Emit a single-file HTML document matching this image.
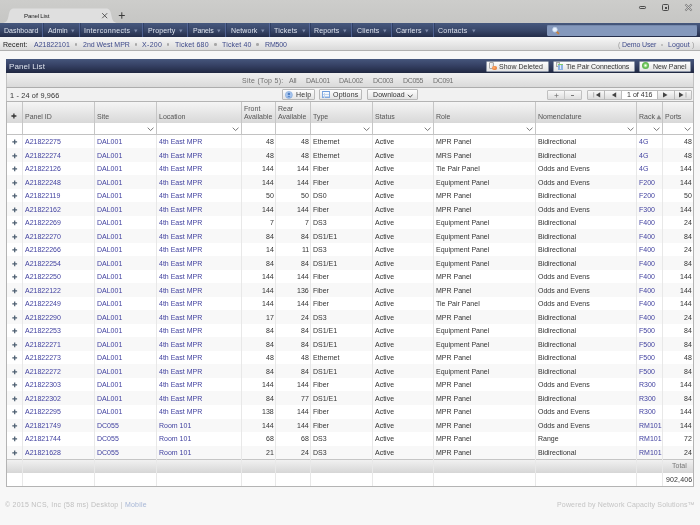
<!DOCTYPE html><html><head><meta charset="utf-8"><style>
*{margin:0;padding:0;box-sizing:border-box}
html,body{width:700px;height:525px;overflow:hidden}
body{position:relative;background:#f7f7f7;font-family:"Liberation Sans",sans-serif;font-size:7px;color:#333}
.abs{position:absolute}
.t{position:absolute;white-space:nowrap;will-change:transform}
</style></head><body>
<div class="abs" style="left:0;top:0;width:700px;height:23px;background:linear-gradient(#cdcdcb,#c6c6c4)"></div>
<svg class="abs" style="left:0;top:0" width="140" height="23"><path d="M2 23 C6 23 7.5 21 8.5 16 C9.5 10.5 10.5 8.6 14 8.6 L106 8.6 C109.5 8.6 110.5 10.5 111.5 16 C112.5 21 114 23 118 23 Z" fill="#dfdfdf"/></svg>
<div class="t" style="top:11.91px;font-size:6.2px;line-height:7.12px;color:#222;left:23.60px;letter-spacing:-0.199px;">Panel List</div>
<svg class="abs" style="left:101px;top:12px" width="8" height="8"><path d="M1.2 1.2 L6.2 6.2 M6.2 1.2 L1.2 6.2" stroke="#3a3a3a" stroke-width="0.8"/></svg>
<svg class="abs" style="left:118px;top:12px" width="8" height="8"><path d="M0.8 3.5 L6.8 3.5 M3.8 0.3 L3.8 6.7" stroke="#3a3a3a" stroke-width="1"/></svg>
<div class="abs" style="left:639px;top:6.3px;width:7px;height:2.4px;border:1px solid #4a4a4a;border-radius:1.2px"></div>
<div class="abs" style="left:662px;top:4px;width:7px;height:7px;border:1px solid #4a4a4a;border-radius:1.5px"></div>
<div class="abs" style="left:664.5px;top:6.5px;width:2px;height:2px;background:#4a4a4a"></div>
<svg class="abs" style="left:684px;top:3px" width="9" height="9"><path d="M1.4 1.4 L7.6 7.6 M7.6 1.4 L1.4 7.6" stroke="#7a7a7a" stroke-width="1.9"/><path d="M1.6 1.6 L7.4 7.4 M7.4 1.6 L1.6 7.4" stroke="#e4e4e4" stroke-width="0.7"/></svg>
<div class="abs" style="left:0;top:23px;width:700px;height:14px;background:linear-gradient(#46587e,#384668 55%,#242d49)"></div>
<div class="t" style="top:26.77px;font-size:7px;line-height:8.04px;color:#dde2ec;left:3.70px;letter-spacing:0.006px;">Dashboard</div>
<div class="abs" style="left:42.0px;top:23px;width:1px;height:14px;background:#56699a;opacity:.85"></div>
<div class="abs" style="left:43.0px;top:23px;width:1px;height:14px;background:#26355a;opacity:.6"></div>
<div class="t" style="top:26.77px;font-size:7px;line-height:8.04px;color:#dde2ec;left:47.80px;letter-spacing:-0.049px;">Admin</div>
<div class="abs" style="left:78.5px;top:23px;width:1px;height:14px;background:#56699a;opacity:.85"></div>
<div class="abs" style="left:79.5px;top:23px;width:1px;height:14px;background:#26355a;opacity:.6"></div>
<svg class="abs" style="left:70.60000000000001px;top:28.9px" width="4" height="4"><path d="M0.1 0.4 L3.5 0.4 L1.8 3.6 Z" fill="#7f8cab"/></svg>
<div class="t" style="top:26.77px;font-size:7px;line-height:8.04px;color:#dde2ec;left:83.80px;letter-spacing:0.336px;">Interconnects</div>
<div class="abs" style="left:142.3px;top:23px;width:1px;height:14px;background:#56699a;opacity:.85"></div>
<div class="abs" style="left:143.3px;top:23px;width:1px;height:14px;background:#26355a;opacity:.6"></div>
<svg class="abs" style="left:133.89999999999998px;top:28.9px" width="4" height="4"><path d="M0.1 0.4 L3.5 0.4 L1.8 3.6 Z" fill="#7f8cab"/></svg>
<div class="t" style="top:26.77px;font-size:7px;line-height:8.04px;color:#dde2ec;left:147.60px;letter-spacing:0.116px;">Property</div>
<div class="abs" style="left:187.1px;top:23px;width:1px;height:14px;background:#56699a;opacity:.85"></div>
<div class="abs" style="left:188.1px;top:23px;width:1px;height:14px;background:#26355a;opacity:.6"></div>
<svg class="abs" style="left:178.6px;top:28.9px" width="4" height="4"><path d="M0.1 0.4 L3.5 0.4 L1.8 3.6 Z" fill="#7f8cab"/></svg>
<div class="t" style="top:26.77px;font-size:7px;line-height:8.04px;color:#dde2ec;left:192.60px;letter-spacing:-0.134px;">Panels</div>
<div class="abs" style="left:225.4px;top:23px;width:1px;height:14px;background:#56699a;opacity:.85"></div>
<div class="abs" style="left:226.4px;top:23px;width:1px;height:14px;background:#26355a;opacity:.6"></div>
<svg class="abs" style="left:216.79999999999998px;top:28.9px" width="4" height="4"><path d="M0.1 0.4 L3.5 0.4 L1.8 3.6 Z" fill="#7f8cab"/></svg>
<div class="t" style="top:26.77px;font-size:7px;line-height:8.04px;color:#dde2ec;left:230.50px;letter-spacing:0.116px;">Network</div>
<div class="abs" style="left:268.9px;top:23px;width:1px;height:14px;background:#56699a;opacity:.85"></div>
<div class="abs" style="left:269.9px;top:23px;width:1px;height:14px;background:#26355a;opacity:.6"></div>
<svg class="abs" style="left:260.7px;top:28.9px" width="4" height="4"><path d="M0.1 0.4 L3.5 0.4 L1.8 3.6 Z" fill="#7f8cab"/></svg>
<div class="t" style="top:26.77px;font-size:7px;line-height:8.04px;color:#dde2ec;left:274.30px;letter-spacing:0.240px;">Tickets</div>
<div class="abs" style="left:309.4px;top:23px;width:1px;height:14px;background:#56699a;opacity:.85"></div>
<div class="abs" style="left:310.4px;top:23px;width:1px;height:14px;background:#26355a;opacity:.6"></div>
<svg class="abs" style="left:301.5px;top:28.9px" width="4" height="4"><path d="M0.1 0.4 L3.5 0.4 L1.8 3.6 Z" fill="#7f8cab"/></svg>
<div class="t" style="top:26.77px;font-size:7px;line-height:8.04px;color:#dde2ec;left:314.40px;letter-spacing:0.141px;">Reports</div>
<div class="abs" style="left:351.3px;top:23px;width:1px;height:14px;background:#56699a;opacity:.85"></div>
<div class="abs" style="left:352.3px;top:23px;width:1px;height:14px;background:#26355a;opacity:.6"></div>
<svg class="abs" style="left:343.2px;top:28.9px" width="4" height="4"><path d="M0.1 0.4 L3.5 0.4 L1.8 3.6 Z" fill="#7f8cab"/></svg>
<div class="t" style="top:26.77px;font-size:7px;line-height:8.04px;color:#dde2ec;left:356.80px;letter-spacing:0.156px;">Clients</div>
<div class="abs" style="left:390.8px;top:23px;width:1px;height:14px;background:#56699a;opacity:.85"></div>
<div class="abs" style="left:391.8px;top:23px;width:1px;height:14px;background:#26355a;opacity:.6"></div>
<svg class="abs" style="left:382.5px;top:28.9px" width="4" height="4"><path d="M0.1 0.4 L3.5 0.4 L1.8 3.6 Z" fill="#7f8cab"/></svg>
<div class="t" style="top:26.77px;font-size:7px;line-height:8.04px;color:#dde2ec;left:396.00px;letter-spacing:0.076px;">Carriers</div>
<div class="abs" style="left:432.5px;top:23px;width:1px;height:14px;background:#56699a;opacity:.85"></div>
<div class="abs" style="left:433.5px;top:23px;width:1px;height:14px;background:#26355a;opacity:.6"></div>
<svg class="abs" style="left:424.5px;top:28.9px" width="4" height="4"><path d="M0.1 0.4 L3.5 0.4 L1.8 3.6 Z" fill="#7f8cab"/></svg>
<div class="t" style="top:26.77px;font-size:7px;line-height:8.04px;color:#dde2ec;left:438.00px;letter-spacing:0.222px;">Contacts</div>
<svg class="abs" style="left:471.5px;top:28.9px" width="4" height="4"><path d="M0.1 0.4 L3.5 0.4 L1.8 3.6 Z" fill="#7f8cab"/></svg>
<div class="abs" style="left:547.4px;top:25.1px;width:150px;height:10.8px;background:#8498bc;border-radius:1.5px;box-shadow:inset 0 1px 0 #7488ac"></div>
<svg class="abs" style="left:551.4px;top:26px" width="10" height="10"><path d="M5.6 5.6 L7.4 7.4" stroke="#c8803c" stroke-width="2" stroke-linecap="round"/><circle cx="3.9" cy="3.7" r="2.4" fill="#e8f0fb" stroke="#bcd0ea" stroke-width="0.7"/></svg>
<div class="abs" style="left:0;top:37px;width:700px;height:13.5px;background:linear-gradient(#f7f7f7,#dadada);border-bottom:1px solid #b0b0b0"></div>
<div class="t" style="top:40.77px;font-size:7px;line-height:8.04px;color:#1a1a1a;left:2.70px;letter-spacing:0.068px;">Recent:</div>
<div class="t" style="top:40.77px;font-size:7px;line-height:8.04px;color:#3e4a8a;left:33.75px;letter-spacing:-0.003px;">A21822101</div>
<div class="t" style="top:40.77px;font-size:7px;line-height:8.04px;color:#3e4a8a;left:82.50px;letter-spacing:-0.004px;">2nd West MPR</div>
<div class="t" style="top:40.77px;font-size:7px;line-height:8.04px;color:#3e4a8a;left:141.80px;letter-spacing:0.323px;">X-200</div>
<div class="t" style="top:40.77px;font-size:7px;line-height:8.04px;color:#3e4a8a;left:175.00px;letter-spacing:0.165px;">Ticket 680</div>
<div class="t" style="top:40.77px;font-size:7px;line-height:8.04px;color:#3e4a8a;left:222.10px;letter-spacing:0.162px;">Ticket 40</div>
<div class="t" style="top:40.77px;font-size:7px;line-height:8.04px;color:#3e4a8a;left:264.50px;letter-spacing:-0.156px;">RM500</div>
<div class="abs" style="left:75.0px;top:43.4px;width:2.4px;height:2.4px;border-radius:50%;background:#a8a8a8"></div>
<div class="abs" style="left:134.60000000000002px;top:43.4px;width:2.4px;height:2.4px;border-radius:50%;background:#a8a8a8"></div>
<div class="abs" style="left:167.10000000000002px;top:43.4px;width:2.4px;height:2.4px;border-radius:50%;background:#a8a8a8"></div>
<div class="abs" style="left:214.20000000000002px;top:43.4px;width:2.4px;height:2.4px;border-radius:50%;background:#a8a8a8"></div>
<div class="abs" style="left:256.40000000000003px;top:43.4px;width:2.4px;height:2.4px;border-radius:50%;background:#a8a8a8"></div>
<div class="t" style="top:40.97px;font-size:7px;line-height:8.04px;color:#9a9a9a;left:617.80px;">(</div>
<div class="t" style="top:40.77px;font-size:7px;line-height:8.04px;color:#3e4a8a;left:621.70px;letter-spacing:-0.123px;">Demo User</div>
<div class="abs" style="left:660.7px;top:43.8px;width:2px;height:2px;border-radius:50%;background:#b4b4b4"></div>
<div class="t" style="top:40.77px;font-size:7px;line-height:8.04px;color:#3e4a8a;left:667.90px;letter-spacing:0.063px;">Logout</div>
<div class="t" style="top:40.97px;font-size:7px;line-height:8.04px;color:#9a9a9a;left:692.20px;">)</div>
<div class="abs" style="left:6.25px;top:58.6px;width:687.25px;height:14px;background:linear-gradient(#46567c,#343f62 50%,#202841)"></div>
<div class="t" style="top:61.82px;font-size:8px;line-height:9.19px;color:#dde2ec;left:8.90px;letter-spacing:0.086px;">Panel List</div>
<div class="abs" style="left:485.5px;top:60.5px;width:63.10000000000002px;height:11.0px;background:linear-gradient(#fdfdfd,#e4e4e4);border:1px solid #8e97a8;border-radius:1px"></div>
<div class="t" style="top:63.17px;font-size:7px;line-height:8.04px;color:#333;left:499.10px;letter-spacing:0.017px;">Show Deleted</div>
<div class="abs" style="left:552.7px;top:60.5px;width:82.29999999999995px;height:11.0px;background:linear-gradient(#fdfdfd,#e4e4e4);border:1px solid #8e97a8;border-radius:1px"></div>
<div class="t" style="top:63.17px;font-size:7px;line-height:8.04px;color:#333;left:566.00px;letter-spacing:-0.076px;">Tie Pair Connections</div>
<div class="abs" style="left:638.9px;top:60.5px;width:52.39999999999998px;height:11.0px;background:linear-gradient(#fdfdfd,#e4e4e4);border:1px solid #8e97a8;border-radius:1px"></div>
<div class="t" style="top:63.17px;font-size:7px;line-height:8.04px;color:#333;left:652.90px;letter-spacing:-0.040px;">New Panel</div>
<div class="abs" style="left:489.2px;top:62.3px;width:5.2px;height:7px;background:linear-gradient(90deg,#fafafa,#dedede);border:0.7px solid #a8a8a8;border-radius:1px"></div>
<div class="abs" style="left:492.4px;top:66.3px;width:4.2px;height:4.2px;border-radius:50%;background:radial-gradient(circle at 40% 40%,#ffb070,#e0641a)"></div>
<div class="abs" style="left:556.3px;top:62.3px;width:4px;height:4.5px;background:#e8e8e8;border:0.6px solid #aaa"></div>
<div class="abs" style="left:557.5px;top:63.8px;width:5.8px;height:6px;background:#dce9f8;border:0.6px solid #8fb4e4"></div>
<div class="abs" style="left:559.4px;top:64.6px;width:0.6px;height:4.6px;background:#8fb4e4"></div>
<div class="abs" style="left:561.2px;top:64.6px;width:0.6px;height:4.6px;background:#8fb4e4"></div>
<div class="abs" style="left:557.8px;top:64.1px;width:5px;height:0.8px;background:#7ecb6a"></div>
<div class="abs" style="left:641.8px;top:62.2px;width:7.2px;height:7.2px;border-radius:50%;background:radial-gradient(circle,#ffffff 0,#c9f0b8 18%,#6cc25a 45%,#3f9d36 100%)"></div>
<div class="abs" style="left:6.25px;top:72.6px;width:687.25px;height:15px;background:linear-gradient(#f0f0f0,#dadada);border-left:1px solid #c2c2c2;border-right:1px solid #c2c2c2;border-bottom:1px solid #adadad"></div>
<div class="t" style="top:76.67px;font-size:7px;line-height:8.04px;color:#707070;left:242.00px;letter-spacing:0.296px;">Site (Top 5):</div>
<div class="t" style="top:76.67px;font-size:7px;line-height:8.04px;color:#707070;left:289.00px;letter-spacing:-0.094px;">All</div>
<div class="t" style="top:76.67px;font-size:7px;line-height:8.04px;color:#707070;left:305.70px;letter-spacing:-0.216px;">DAL001</div>
<div class="t" style="top:76.67px;font-size:7px;line-height:8.04px;color:#707070;left:338.90px;letter-spacing:-0.216px;">DAL002</div>
<div class="t" style="top:76.67px;font-size:7px;line-height:8.04px;color:#707070;left:372.90px;letter-spacing:-0.359px;">DC003</div>
<div class="t" style="top:76.67px;font-size:7px;line-height:8.04px;color:#707070;left:402.90px;letter-spacing:-0.359px;">DC055</div>
<div class="t" style="top:76.67px;font-size:7px;line-height:8.04px;color:#707070;left:432.90px;letter-spacing:-0.359px;">DC091</div>
<div class="abs" style="left:6.25px;top:87.6px;width:687.25px;height:13.9px;background:#f1f1f1;border-left:1px solid #c2c2c2;border-right:1px solid #c2c2c2"></div>
<div class="t" style="top:92.11px;font-size:7.3px;line-height:8.39px;color:#333;left:10.30px;letter-spacing:0.163px;">1 - 24 of 9,966</div>
<div class="abs" style="left:282.4px;top:89.2px;width:32.700000000000045px;height:10.799999999999997px;background:linear-gradient(#fdfdfd,#e4e4e4);border:1px solid #b9b9b9;border-radius:1px"></div>
<svg class="abs" style="left:285px;top:91px" width="8" height="8"><circle cx="3.9" cy="3.9" r="3.5" fill="#a9c6ee"/><circle cx="3.9" cy="3.9" r="3.5" fill="none" stroke="#7ea6dc" stroke-width="0.6"/><circle cx="3.9" cy="3.0" r="1.3" fill="#4f7fc4"/><path d="M2.2 6.3 Q3.9 3.9 5.6 6.3 Z" fill="#4f7fc4"/></svg>
<div class="t" style="top:90.97px;font-size:7px;line-height:8.04px;color:#333;left:296.00px;letter-spacing:0.223px;">Help</div>
<div class="abs" style="left:319.3px;top:89.2px;width:42.30000000000001px;height:10.799999999999997px;background:linear-gradient(#fdfdfd,#e4e4e4);border:1px solid #b9b9b9;border-radius:1px"></div>
<div class="abs" style="left:322px;top:91.1px;width:7.7px;height:6.9px;background:#f6f9fd;border:0.7px solid #82aae0;border-top:1.3px solid #6f9ddc"></div>
<div class="abs" style="left:322.8px;top:94px;width:6px;height:0.5px;background:#c4d6ee"></div>
<div class="abs" style="left:322.8px;top:95.8px;width:6px;height:0.5px;background:#c4d6ee"></div>
<div class="abs" style="left:324.3px;top:92.6px;width:0.5px;height:5px;background:#c4d6ee"></div>
<div class="t" style="top:90.97px;font-size:7px;line-height:8.04px;color:#333;left:333.10px;letter-spacing:0.196px;">Options</div>
<div class="abs" style="left:366.9px;top:89.2px;width:51.0px;height:10.799999999999997px;background:linear-gradient(#fdfdfd,#e4e4e4);border:1px solid #b9b9b9;border-radius:1px"></div>
<div class="t" style="top:90.97px;font-size:7px;line-height:8.04px;color:#333;left:372.60px;letter-spacing:0.082px;">Download</div>
<svg class="abs" style="left:406.8px;top:93.6px" width="6.5" height="4"><path d="M0.8 0.8 L3.2 3 L5.6 0.8" fill="none" stroke="#333" stroke-width="0.9"/></svg>
<div class="abs" style="left:547.3px;top:89.5px;width:34.3px;height:10.2px;background:linear-gradient(#f8f8f8,#dedede);border:1px solid #c0c0c0;border-radius:1px"></div>
<div class="abs" style="left:564.1px;top:89.5px;width:1px;height:10.2px;background:#c4c4c4"></div>
<svg class="abs" style="left:553.5px;top:93px" width="5" height="5"><path d="M0.5 2.5 L4.5 2.5 M2.5 0.5 L2.5 4.5" stroke="#777" stroke-width="0.7"/></svg>
<div class="abs" style="left:571.3px;top:95.3px;width:2.6px;height:0.7px;background:#777"></div>
<div class="abs" style="left:587.3px;top:89.5px;width:104.4px;height:10.2px;background:linear-gradient(#f8f8f8,#dcdcdc);border:1px solid #bdbdbd;border-radius:1px"></div>
<div class="abs" style="left:604.2px;top:89.5px;width:1px;height:10.2px;background:#b8b8b8"></div>
<div class="abs" style="left:673.9px;top:89.5px;width:1px;height:10.2px;background:#b8b8b8"></div>
<div class="abs" style="left:621.1px;top:89.5px;width:36.7px;height:10.2px;background:#fff;border:1px solid #bdbdbd"></div>
<div class="t" style="top:91.47px;font-size:7px;line-height:8.04px;color:#333;left:627.30px;letter-spacing:0.023px;">1 of 416</div>
<svg class="abs" style="left:591.5px;top:91.8px" width="10" height="6"><path d="M1.6 0.3 L1.6 5.5" stroke="#bbb" stroke-width="1.2"/><path d="M8.2 0.3 L8.2 5.5 L3.9 2.9 Z" fill="#444"/></svg>
<svg class="abs" style="left:609.5px;top:91.8px" width="8" height="6"><path d="M6.2 0.3 L6.2 5.5 L1.9 2.9 Z" fill="#444"/></svg>
<svg class="abs" style="left:662px;top:91.8px" width="8" height="6"><path d="M1 0.3 L1 5.5 L5.5 2.9 Z" fill="#444"/></svg>
<svg class="abs" style="left:678px;top:91.8px" width="10" height="6"><path d="M1 0.3 L1 5.5 L5.5 2.9 Z" fill="#444"/><path d="M8 0.3 L8 5.5" stroke="#bbb" stroke-width="1.2"/></svg>
<div class="abs" style="left:6.25px;top:101.2px;width:687.25px;height:385.6px;background:#fff;border:1px solid #b4b4b4"></div>
<div class="abs" style="left:7.25px;top:102.0px;width:685.25px;height:20.499999999999996px;background:linear-gradient(#f5f5f5,#d8d8d8)"></div>
<div class="abs" style="left:7.25px;top:133.8px;width:685.25px;height:1px;background:#c2c2c2"></div>
<div class="abs" style="left:7.25px;top:148.12px;width:685.25px;height:13.52px;background:#f8f8f8"></div>
<div class="abs" style="left:7.25px;top:175.16px;width:685.25px;height:13.52px;background:#f8f8f8"></div>
<div class="abs" style="left:7.25px;top:202.2px;width:685.25px;height:13.52px;background:#f8f8f8"></div>
<div class="abs" style="left:7.25px;top:229.24px;width:685.25px;height:13.52px;background:#f8f8f8"></div>
<div class="abs" style="left:7.25px;top:256.28px;width:685.25px;height:13.52px;background:#f8f8f8"></div>
<div class="abs" style="left:7.25px;top:283.32px;width:685.25px;height:13.52px;background:#f8f8f8"></div>
<div class="abs" style="left:7.25px;top:310.36px;width:685.25px;height:13.52px;background:#f8f8f8"></div>
<div class="abs" style="left:7.25px;top:337.4px;width:685.25px;height:13.52px;background:#f8f8f8"></div>
<div class="abs" style="left:7.25px;top:364.44px;width:685.25px;height:13.52px;background:#f8f8f8"></div>
<div class="abs" style="left:7.25px;top:391.48px;width:685.25px;height:13.52px;background:#f8f8f8"></div>
<div class="abs" style="left:7.25px;top:418.52px;width:685.25px;height:13.52px;background:#f8f8f8"></div>
<div class="abs" style="left:7.25px;top:445.55999999999995px;width:685.25px;height:13.52px;background:#f8f8f8"></div>
<div class="abs" style="left:7.25px;top:459.2px;width:685.25px;height:13.7px;background:linear-gradient(#f1f1f1,#d6d6d6);border-top:1px solid #c6c6c6"></div>
<div class="abs" style="left:22px;top:102.0px;width:1px;height:31.800000000000008px;background:#c6c6c6"></div>
<div class="abs" style="left:22px;top:134.8px;width:1px;height:351.2px;background:#e8e8e8"></div>
<div class="abs" style="left:94px;top:102.0px;width:1px;height:31.800000000000008px;background:#c6c6c6"></div>
<div class="abs" style="left:94px;top:134.8px;width:1px;height:351.2px;background:#e8e8e8"></div>
<div class="abs" style="left:156px;top:102.0px;width:1px;height:31.800000000000008px;background:#c6c6c6"></div>
<div class="abs" style="left:156px;top:134.8px;width:1px;height:351.2px;background:#e8e8e8"></div>
<div class="abs" style="left:241px;top:102.0px;width:1px;height:31.800000000000008px;background:#c6c6c6"></div>
<div class="abs" style="left:241px;top:134.8px;width:1px;height:351.2px;background:#e8e8e8"></div>
<div class="abs" style="left:275px;top:102.0px;width:1px;height:31.800000000000008px;background:#c6c6c6"></div>
<div class="abs" style="left:275px;top:134.8px;width:1px;height:351.2px;background:#e8e8e8"></div>
<div class="abs" style="left:310px;top:102.0px;width:1px;height:31.800000000000008px;background:#c6c6c6"></div>
<div class="abs" style="left:310px;top:134.8px;width:1px;height:351.2px;background:#e8e8e8"></div>
<div class="abs" style="left:372px;top:102.0px;width:1px;height:31.800000000000008px;background:#c6c6c6"></div>
<div class="abs" style="left:372px;top:134.8px;width:1px;height:351.2px;background:#e8e8e8"></div>
<div class="abs" style="left:433px;top:102.0px;width:1px;height:31.800000000000008px;background:#c6c6c6"></div>
<div class="abs" style="left:433px;top:134.8px;width:1px;height:351.2px;background:#e8e8e8"></div>
<div class="abs" style="left:535px;top:102.0px;width:1px;height:31.800000000000008px;background:#c6c6c6"></div>
<div class="abs" style="left:535px;top:134.8px;width:1px;height:351.2px;background:#e8e8e8"></div>
<div class="abs" style="left:636px;top:102.0px;width:1px;height:31.800000000000008px;background:#c6c6c6"></div>
<div class="abs" style="left:636px;top:134.8px;width:1px;height:351.2px;background:#e8e8e8"></div>
<div class="abs" style="left:662px;top:102.0px;width:1px;height:31.800000000000008px;background:#c6c6c6"></div>
<div class="abs" style="left:662px;top:134.8px;width:1px;height:351.2px;background:#e8e8e8"></div>
<svg class="abs" style="left:11.1px;top:113.3px" width="6" height="6"><path d="M0.4 3 L5.4 3 M2.9 0.5 L2.9 5.5" stroke="#333" stroke-width="1.3"/></svg>
<div class="t" style="top:112.97px;font-size:7px;line-height:8.04px;color:#555;left:24.80px;">Panel ID</div>
<div class="t" style="top:112.97px;font-size:7px;line-height:8.04px;color:#555;left:96.80px;">Site</div>
<div class="t" style="top:112.97px;font-size:7px;line-height:8.04px;color:#555;left:158.80px;">Location</div>
<div class="t" style="top:104.77px;font-size:7px;line-height:8.04px;color:#555;left:243.80px;">Front</div>
<div class="t" style="top:112.77px;font-size:7px;line-height:8.04px;color:#555;left:243.80px;">Available</div>
<div class="t" style="top:104.77px;font-size:7px;line-height:8.04px;color:#555;left:277.80px;">Rear</div>
<div class="t" style="top:112.77px;font-size:7px;line-height:8.04px;color:#555;left:277.80px;">Available</div>
<div class="t" style="top:112.97px;font-size:7px;line-height:8.04px;color:#555;left:312.80px;">Type</div>
<div class="t" style="top:112.97px;font-size:7px;line-height:8.04px;color:#555;left:374.80px;">Status</div>
<div class="t" style="top:112.97px;font-size:7px;line-height:8.04px;color:#555;left:435.80px;">Role</div>
<div class="t" style="top:112.97px;font-size:7px;line-height:8.04px;color:#555;left:537.80px;">Nomenclature</div>
<div class="t" style="top:112.97px;font-size:7px;line-height:8.04px;color:#555;left:638.80px;">Rack</div>
<div class="t" style="top:112.97px;font-size:7px;line-height:8.04px;color:#555;left:664.80px;">Ports</div>
<svg class="abs" style="left:655.5px;top:113.6px" width="6" height="6"><path d="M0.5 5.2 L5.3 5.2 L2.9 0.8 Z" fill="#8a8a8a"/></svg>
<svg class="abs" style="left:147px;top:126.8px" width="8" height="5"><path d="M0.7 0.7 L3.6 3.5 L6.5 0.7" fill="none" stroke="#555" stroke-width="0.8"/></svg>
<svg class="abs" style="left:232px;top:126.8px" width="8" height="5"><path d="M0.7 0.7 L3.6 3.5 L6.5 0.7" fill="none" stroke="#555" stroke-width="0.8"/></svg>
<svg class="abs" style="left:363px;top:126.8px" width="8" height="5"><path d="M0.7 0.7 L3.6 3.5 L6.5 0.7" fill="none" stroke="#555" stroke-width="0.8"/></svg>
<svg class="abs" style="left:424px;top:126.8px" width="8" height="5"><path d="M0.7 0.7 L3.6 3.5 L6.5 0.7" fill="none" stroke="#555" stroke-width="0.8"/></svg>
<svg class="abs" style="left:526px;top:126.8px" width="8" height="5"><path d="M0.7 0.7 L3.6 3.5 L6.5 0.7" fill="none" stroke="#555" stroke-width="0.8"/></svg>
<svg class="abs" style="left:627px;top:126.8px" width="8" height="5"><path d="M0.7 0.7 L3.6 3.5 L6.5 0.7" fill="none" stroke="#555" stroke-width="0.8"/></svg>
<svg class="abs" style="left:653px;top:126.8px" width="8" height="5"><path d="M0.7 0.7 L3.6 3.5 L6.5 0.7" fill="none" stroke="#555" stroke-width="0.8"/></svg>
<svg class="abs" style="left:684px;top:126.8px" width="8" height="5"><path d="M0.7 0.7 L3.6 3.5 L6.5 0.7" fill="none" stroke="#555" stroke-width="0.8"/></svg>
<svg class="abs" style="left:12px;top:139.0px" width="6" height="6"><path d="M0.3 2.8 L5.1 2.8 M2.7 0.4 L2.7 5.2" stroke="#4c5e70" stroke-width="1.25"/></svg>
<div class="t" style="top:137.97px;font-size:7px;line-height:8.04px;color:#4242a0;left:24.60px;">A21822275</div>
<div class="t" style="top:137.97px;font-size:7px;line-height:8.04px;color:#4242a0;left:96.60px;">DAL001</div>
<div class="t" style="top:137.97px;font-size:7px;line-height:8.04px;color:#4242a0;left:158.60px;">4th East MPR</div>
<div class="t" style="top:137.97px;font-size:7px;line-height:8.04px;color:#333;right:426.00px;">48</div>
<div class="t" style="top:137.97px;font-size:7px;line-height:8.04px;color:#333;right:391.00px;">48</div>
<div class="t" style="top:137.97px;font-size:7px;line-height:8.04px;color:#333;left:312.60px;">Ethernet</div>
<div class="t" style="top:137.97px;font-size:7px;line-height:8.04px;color:#333;left:374.60px;">Active</div>
<div class="t" style="top:137.97px;font-size:7px;line-height:8.04px;color:#333;left:435.60px;">MPR Panel</div>
<div class="t" style="top:137.97px;font-size:7px;line-height:8.04px;color:#333;left:537.60px;">Bidirectional</div>
<div class="t" style="top:137.97px;font-size:7px;line-height:8.04px;color:#4242a0;left:638.60px;">4G</div>
<div class="t" style="top:137.97px;font-size:7px;line-height:8.04px;color:#333;right:8.00px;">48</div>
<svg class="abs" style="left:12px;top:153.0px" width="6" height="6"><path d="M0.3 2.8 L5.1 2.8 M2.7 0.4 L2.7 5.2" stroke="#4c5e70" stroke-width="1.25"/></svg>
<div class="t" style="top:151.97px;font-size:7px;line-height:8.04px;color:#4242a0;left:24.60px;">A21822274</div>
<div class="t" style="top:151.97px;font-size:7px;line-height:8.04px;color:#4242a0;left:96.60px;">DAL001</div>
<div class="t" style="top:151.97px;font-size:7px;line-height:8.04px;color:#4242a0;left:158.60px;">4th East MPR</div>
<div class="t" style="top:151.97px;font-size:7px;line-height:8.04px;color:#333;right:426.00px;">48</div>
<div class="t" style="top:151.97px;font-size:7px;line-height:8.04px;color:#333;right:391.00px;">48</div>
<div class="t" style="top:151.97px;font-size:7px;line-height:8.04px;color:#333;left:312.60px;">Ethernet</div>
<div class="t" style="top:151.97px;font-size:7px;line-height:8.04px;color:#333;left:374.60px;">Active</div>
<div class="t" style="top:151.97px;font-size:7px;line-height:8.04px;color:#333;left:435.60px;">MRS Panel</div>
<div class="t" style="top:151.97px;font-size:7px;line-height:8.04px;color:#333;left:537.60px;">Bidirectional</div>
<div class="t" style="top:151.97px;font-size:7px;line-height:8.04px;color:#4242a0;left:638.60px;">4G</div>
<div class="t" style="top:151.97px;font-size:7px;line-height:8.04px;color:#333;right:8.00px;">48</div>
<svg class="abs" style="left:12px;top:166.0px" width="6" height="6"><path d="M0.3 2.8 L5.1 2.8 M2.7 0.4 L2.7 5.2" stroke="#4c5e70" stroke-width="1.25"/></svg>
<div class="t" style="top:164.97px;font-size:7px;line-height:8.04px;color:#4242a0;left:24.60px;">A21822126</div>
<div class="t" style="top:164.97px;font-size:7px;line-height:8.04px;color:#4242a0;left:96.60px;">DAL001</div>
<div class="t" style="top:164.97px;font-size:7px;line-height:8.04px;color:#4242a0;left:158.60px;">4th East MPR</div>
<div class="t" style="top:164.97px;font-size:7px;line-height:8.04px;color:#333;right:426.00px;">144</div>
<div class="t" style="top:164.97px;font-size:7px;line-height:8.04px;color:#333;right:391.00px;">144</div>
<div class="t" style="top:164.97px;font-size:7px;line-height:8.04px;color:#333;left:312.60px;">Fiber</div>
<div class="t" style="top:164.97px;font-size:7px;line-height:8.04px;color:#333;left:374.60px;">Active</div>
<div class="t" style="top:164.97px;font-size:7px;line-height:8.04px;color:#333;left:435.60px;">Tie Pair Panel</div>
<div class="t" style="top:164.97px;font-size:7px;line-height:8.04px;color:#333;left:537.60px;">Odds and Evens</div>
<div class="t" style="top:164.97px;font-size:7px;line-height:8.04px;color:#4242a0;left:638.60px;">4G</div>
<div class="t" style="top:164.97px;font-size:7px;line-height:8.04px;color:#333;right:8.00px;">144</div>
<svg class="abs" style="left:12px;top:180.0px" width="6" height="6"><path d="M0.3 2.8 L5.1 2.8 M2.7 0.4 L2.7 5.2" stroke="#4c5e70" stroke-width="1.25"/></svg>
<div class="t" style="top:178.97px;font-size:7px;line-height:8.04px;color:#4242a0;left:24.60px;">A21822248</div>
<div class="t" style="top:178.97px;font-size:7px;line-height:8.04px;color:#4242a0;left:96.60px;">DAL001</div>
<div class="t" style="top:178.97px;font-size:7px;line-height:8.04px;color:#4242a0;left:158.60px;">4th East MPR</div>
<div class="t" style="top:178.97px;font-size:7px;line-height:8.04px;color:#333;right:426.00px;">144</div>
<div class="t" style="top:178.97px;font-size:7px;line-height:8.04px;color:#333;right:391.00px;">144</div>
<div class="t" style="top:178.97px;font-size:7px;line-height:8.04px;color:#333;left:312.60px;">Fiber</div>
<div class="t" style="top:178.97px;font-size:7px;line-height:8.04px;color:#333;left:374.60px;">Active</div>
<div class="t" style="top:178.97px;font-size:7px;line-height:8.04px;color:#333;left:435.60px;">Equipment Panel</div>
<div class="t" style="top:178.97px;font-size:7px;line-height:8.04px;color:#333;left:537.60px;">Odds and Evens</div>
<div class="t" style="top:178.97px;font-size:7px;line-height:8.04px;color:#4242a0;left:638.60px;">F200</div>
<div class="t" style="top:178.97px;font-size:7px;line-height:8.04px;color:#333;right:8.00px;">144</div>
<svg class="abs" style="left:12px;top:193.0px" width="6" height="6"><path d="M0.3 2.8 L5.1 2.8 M2.7 0.4 L2.7 5.2" stroke="#4c5e70" stroke-width="1.25"/></svg>
<div class="t" style="top:191.97px;font-size:7px;line-height:8.04px;color:#4242a0;left:24.60px;">A21822119</div>
<div class="t" style="top:191.97px;font-size:7px;line-height:8.04px;color:#4242a0;left:96.60px;">DAL001</div>
<div class="t" style="top:191.97px;font-size:7px;line-height:8.04px;color:#4242a0;left:158.60px;">4th East MPR</div>
<div class="t" style="top:191.97px;font-size:7px;line-height:8.04px;color:#333;right:426.00px;">50</div>
<div class="t" style="top:191.97px;font-size:7px;line-height:8.04px;color:#333;right:391.00px;">50</div>
<div class="t" style="top:191.97px;font-size:7px;line-height:8.04px;color:#333;left:312.60px;">DS0</div>
<div class="t" style="top:191.97px;font-size:7px;line-height:8.04px;color:#333;left:374.60px;">Active</div>
<div class="t" style="top:191.97px;font-size:7px;line-height:8.04px;color:#333;left:435.60px;">MPR Panel</div>
<div class="t" style="top:191.97px;font-size:7px;line-height:8.04px;color:#333;left:537.60px;">Bidirectional</div>
<div class="t" style="top:191.97px;font-size:7px;line-height:8.04px;color:#4242a0;left:638.60px;">F200</div>
<div class="t" style="top:191.97px;font-size:7px;line-height:8.04px;color:#333;right:8.00px;">50</div>
<svg class="abs" style="left:12px;top:207.0px" width="6" height="6"><path d="M0.3 2.8 L5.1 2.8 M2.7 0.4 L2.7 5.2" stroke="#4c5e70" stroke-width="1.25"/></svg>
<div class="t" style="top:205.97px;font-size:7px;line-height:8.04px;color:#4242a0;left:24.60px;">A21822162</div>
<div class="t" style="top:205.97px;font-size:7px;line-height:8.04px;color:#4242a0;left:96.60px;">DAL001</div>
<div class="t" style="top:205.97px;font-size:7px;line-height:8.04px;color:#4242a0;left:158.60px;">4th East MPR</div>
<div class="t" style="top:205.97px;font-size:7px;line-height:8.04px;color:#333;right:426.00px;">144</div>
<div class="t" style="top:205.97px;font-size:7px;line-height:8.04px;color:#333;right:391.00px;">144</div>
<div class="t" style="top:205.97px;font-size:7px;line-height:8.04px;color:#333;left:312.60px;">Fiber</div>
<div class="t" style="top:205.97px;font-size:7px;line-height:8.04px;color:#333;left:374.60px;">Active</div>
<div class="t" style="top:205.97px;font-size:7px;line-height:8.04px;color:#333;left:435.60px;">MPR Panel</div>
<div class="t" style="top:205.97px;font-size:7px;line-height:8.04px;color:#333;left:537.60px;">Odds and Evens</div>
<div class="t" style="top:205.97px;font-size:7px;line-height:8.04px;color:#4242a0;left:638.60px;">F300</div>
<div class="t" style="top:205.97px;font-size:7px;line-height:8.04px;color:#333;right:8.00px;">144</div>
<svg class="abs" style="left:12px;top:220.0px" width="6" height="6"><path d="M0.3 2.8 L5.1 2.8 M2.7 0.4 L2.7 5.2" stroke="#4c5e70" stroke-width="1.25"/></svg>
<div class="t" style="top:218.97px;font-size:7px;line-height:8.04px;color:#4242a0;left:24.60px;">A21822269</div>
<div class="t" style="top:218.97px;font-size:7px;line-height:8.04px;color:#4242a0;left:96.60px;">DAL001</div>
<div class="t" style="top:218.97px;font-size:7px;line-height:8.04px;color:#4242a0;left:158.60px;">4th East MPR</div>
<div class="t" style="top:218.97px;font-size:7px;line-height:8.04px;color:#333;right:426.00px;">7</div>
<div class="t" style="top:218.97px;font-size:7px;line-height:8.04px;color:#333;right:391.00px;">7</div>
<div class="t" style="top:218.97px;font-size:7px;line-height:8.04px;color:#333;left:312.60px;">DS3</div>
<div class="t" style="top:218.97px;font-size:7px;line-height:8.04px;color:#333;left:374.60px;">Active</div>
<div class="t" style="top:218.97px;font-size:7px;line-height:8.04px;color:#333;left:435.60px;">Equipment Panel</div>
<div class="t" style="top:218.97px;font-size:7px;line-height:8.04px;color:#333;left:537.60px;">Bidirectional</div>
<div class="t" style="top:218.97px;font-size:7px;line-height:8.04px;color:#4242a0;left:638.60px;">F400</div>
<div class="t" style="top:218.97px;font-size:7px;line-height:8.04px;color:#333;right:8.00px;">24</div>
<svg class="abs" style="left:12px;top:234.0px" width="6" height="6"><path d="M0.3 2.8 L5.1 2.8 M2.7 0.4 L2.7 5.2" stroke="#4c5e70" stroke-width="1.25"/></svg>
<div class="t" style="top:232.97px;font-size:7px;line-height:8.04px;color:#4242a0;left:24.60px;">A21822270</div>
<div class="t" style="top:232.97px;font-size:7px;line-height:8.04px;color:#4242a0;left:96.60px;">DAL001</div>
<div class="t" style="top:232.97px;font-size:7px;line-height:8.04px;color:#4242a0;left:158.60px;">4th East MPR</div>
<div class="t" style="top:232.97px;font-size:7px;line-height:8.04px;color:#333;right:426.00px;">84</div>
<div class="t" style="top:232.97px;font-size:7px;line-height:8.04px;color:#333;right:391.00px;">84</div>
<div class="t" style="top:232.97px;font-size:7px;line-height:8.04px;color:#333;left:312.60px;">DS1/E1</div>
<div class="t" style="top:232.97px;font-size:7px;line-height:8.04px;color:#333;left:374.60px;">Active</div>
<div class="t" style="top:232.97px;font-size:7px;line-height:8.04px;color:#333;left:435.60px;">Equipment Panel</div>
<div class="t" style="top:232.97px;font-size:7px;line-height:8.04px;color:#333;left:537.60px;">Bidirectional</div>
<div class="t" style="top:232.97px;font-size:7px;line-height:8.04px;color:#4242a0;left:638.60px;">F400</div>
<div class="t" style="top:232.97px;font-size:7px;line-height:8.04px;color:#333;right:8.00px;">84</div>
<svg class="abs" style="left:12px;top:247.0px" width="6" height="6"><path d="M0.3 2.8 L5.1 2.8 M2.7 0.4 L2.7 5.2" stroke="#4c5e70" stroke-width="1.25"/></svg>
<div class="t" style="top:245.97px;font-size:7px;line-height:8.04px;color:#4242a0;left:24.60px;">A21822266</div>
<div class="t" style="top:245.97px;font-size:7px;line-height:8.04px;color:#4242a0;left:96.60px;">DAL001</div>
<div class="t" style="top:245.97px;font-size:7px;line-height:8.04px;color:#4242a0;left:158.60px;">4th East MPR</div>
<div class="t" style="top:245.97px;font-size:7px;line-height:8.04px;color:#333;right:426.00px;">14</div>
<div class="t" style="top:245.97px;font-size:7px;line-height:8.04px;color:#333;right:391.00px;">11</div>
<div class="t" style="top:245.97px;font-size:7px;line-height:8.04px;color:#333;left:312.60px;">DS3</div>
<div class="t" style="top:245.97px;font-size:7px;line-height:8.04px;color:#333;left:374.60px;">Active</div>
<div class="t" style="top:245.97px;font-size:7px;line-height:8.04px;color:#333;left:435.60px;">Equipment Panel</div>
<div class="t" style="top:245.97px;font-size:7px;line-height:8.04px;color:#333;left:537.60px;">Bidirectional</div>
<div class="t" style="top:245.97px;font-size:7px;line-height:8.04px;color:#4242a0;left:638.60px;">F400</div>
<div class="t" style="top:245.97px;font-size:7px;line-height:8.04px;color:#333;right:8.00px;">24</div>
<svg class="abs" style="left:12px;top:261.0px" width="6" height="6"><path d="M0.3 2.8 L5.1 2.8 M2.7 0.4 L2.7 5.2" stroke="#4c5e70" stroke-width="1.25"/></svg>
<div class="t" style="top:259.97px;font-size:7px;line-height:8.04px;color:#4242a0;left:24.60px;">A21822254</div>
<div class="t" style="top:259.97px;font-size:7px;line-height:8.04px;color:#4242a0;left:96.60px;">DAL001</div>
<div class="t" style="top:259.97px;font-size:7px;line-height:8.04px;color:#4242a0;left:158.60px;">4th East MPR</div>
<div class="t" style="top:259.97px;font-size:7px;line-height:8.04px;color:#333;right:426.00px;">84</div>
<div class="t" style="top:259.97px;font-size:7px;line-height:8.04px;color:#333;right:391.00px;">84</div>
<div class="t" style="top:259.97px;font-size:7px;line-height:8.04px;color:#333;left:312.60px;">DS1/E1</div>
<div class="t" style="top:259.97px;font-size:7px;line-height:8.04px;color:#333;left:374.60px;">Active</div>
<div class="t" style="top:259.97px;font-size:7px;line-height:8.04px;color:#333;left:435.60px;">Equipment Panel</div>
<div class="t" style="top:259.97px;font-size:7px;line-height:8.04px;color:#333;left:537.60px;">Bidirectional</div>
<div class="t" style="top:259.97px;font-size:7px;line-height:8.04px;color:#4242a0;left:638.60px;">F400</div>
<div class="t" style="top:259.97px;font-size:7px;line-height:8.04px;color:#333;right:8.00px;">84</div>
<svg class="abs" style="left:12px;top:274.0px" width="6" height="6"><path d="M0.3 2.8 L5.1 2.8 M2.7 0.4 L2.7 5.2" stroke="#4c5e70" stroke-width="1.25"/></svg>
<div class="t" style="top:272.97px;font-size:7px;line-height:8.04px;color:#4242a0;left:24.60px;">A21822250</div>
<div class="t" style="top:272.97px;font-size:7px;line-height:8.04px;color:#4242a0;left:96.60px;">DAL001</div>
<div class="t" style="top:272.97px;font-size:7px;line-height:8.04px;color:#4242a0;left:158.60px;">4th East MPR</div>
<div class="t" style="top:272.97px;font-size:7px;line-height:8.04px;color:#333;right:426.00px;">144</div>
<div class="t" style="top:272.97px;font-size:7px;line-height:8.04px;color:#333;right:391.00px;">144</div>
<div class="t" style="top:272.97px;font-size:7px;line-height:8.04px;color:#333;left:312.60px;">Fiber</div>
<div class="t" style="top:272.97px;font-size:7px;line-height:8.04px;color:#333;left:374.60px;">Active</div>
<div class="t" style="top:272.97px;font-size:7px;line-height:8.04px;color:#333;left:435.60px;">MPR Panel</div>
<div class="t" style="top:272.97px;font-size:7px;line-height:8.04px;color:#333;left:537.60px;">Odds and Evens</div>
<div class="t" style="top:272.97px;font-size:7px;line-height:8.04px;color:#4242a0;left:638.60px;">F400</div>
<div class="t" style="top:272.97px;font-size:7px;line-height:8.04px;color:#333;right:8.00px;">144</div>
<svg class="abs" style="left:12px;top:288.0px" width="6" height="6"><path d="M0.3 2.8 L5.1 2.8 M2.7 0.4 L2.7 5.2" stroke="#4c5e70" stroke-width="1.25"/></svg>
<div class="t" style="top:286.97px;font-size:7px;line-height:8.04px;color:#4242a0;left:24.60px;">A21822122</div>
<div class="t" style="top:286.97px;font-size:7px;line-height:8.04px;color:#4242a0;left:96.60px;">DAL001</div>
<div class="t" style="top:286.97px;font-size:7px;line-height:8.04px;color:#4242a0;left:158.60px;">4th East MPR</div>
<div class="t" style="top:286.97px;font-size:7px;line-height:8.04px;color:#333;right:426.00px;">144</div>
<div class="t" style="top:286.97px;font-size:7px;line-height:8.04px;color:#333;right:391.00px;">136</div>
<div class="t" style="top:286.97px;font-size:7px;line-height:8.04px;color:#333;left:312.60px;">Fiber</div>
<div class="t" style="top:286.97px;font-size:7px;line-height:8.04px;color:#333;left:374.60px;">Active</div>
<div class="t" style="top:286.97px;font-size:7px;line-height:8.04px;color:#333;left:435.60px;">MPR Panel</div>
<div class="t" style="top:286.97px;font-size:7px;line-height:8.04px;color:#333;left:537.60px;">Odds and Evens</div>
<div class="t" style="top:286.97px;font-size:7px;line-height:8.04px;color:#4242a0;left:638.60px;">F400</div>
<div class="t" style="top:286.97px;font-size:7px;line-height:8.04px;color:#333;right:8.00px;">144</div>
<svg class="abs" style="left:12px;top:301.0px" width="6" height="6"><path d="M0.3 2.8 L5.1 2.8 M2.7 0.4 L2.7 5.2" stroke="#4c5e70" stroke-width="1.25"/></svg>
<div class="t" style="top:299.97px;font-size:7px;line-height:8.04px;color:#4242a0;left:24.60px;">A21822249</div>
<div class="t" style="top:299.97px;font-size:7px;line-height:8.04px;color:#4242a0;left:96.60px;">DAL001</div>
<div class="t" style="top:299.97px;font-size:7px;line-height:8.04px;color:#4242a0;left:158.60px;">4th East MPR</div>
<div class="t" style="top:299.97px;font-size:7px;line-height:8.04px;color:#333;right:426.00px;">144</div>
<div class="t" style="top:299.97px;font-size:7px;line-height:8.04px;color:#333;right:391.00px;">144</div>
<div class="t" style="top:299.97px;font-size:7px;line-height:8.04px;color:#333;left:312.60px;">Fiber</div>
<div class="t" style="top:299.97px;font-size:7px;line-height:8.04px;color:#333;left:374.60px;">Active</div>
<div class="t" style="top:299.97px;font-size:7px;line-height:8.04px;color:#333;left:435.60px;">Tie Pair Panel</div>
<div class="t" style="top:299.97px;font-size:7px;line-height:8.04px;color:#333;left:537.60px;">Odds and Evens</div>
<div class="t" style="top:299.97px;font-size:7px;line-height:8.04px;color:#4242a0;left:638.60px;">F400</div>
<div class="t" style="top:299.97px;font-size:7px;line-height:8.04px;color:#333;right:8.00px;">144</div>
<svg class="abs" style="left:12px;top:315.0px" width="6" height="6"><path d="M0.3 2.8 L5.1 2.8 M2.7 0.4 L2.7 5.2" stroke="#4c5e70" stroke-width="1.25"/></svg>
<div class="t" style="top:313.97px;font-size:7px;line-height:8.04px;color:#4242a0;left:24.60px;">A21822290</div>
<div class="t" style="top:313.97px;font-size:7px;line-height:8.04px;color:#4242a0;left:96.60px;">DAL001</div>
<div class="t" style="top:313.97px;font-size:7px;line-height:8.04px;color:#4242a0;left:158.60px;">4th East MPR</div>
<div class="t" style="top:313.97px;font-size:7px;line-height:8.04px;color:#333;right:426.00px;">17</div>
<div class="t" style="top:313.97px;font-size:7px;line-height:8.04px;color:#333;right:391.00px;">24</div>
<div class="t" style="top:313.97px;font-size:7px;line-height:8.04px;color:#333;left:312.60px;">DS3</div>
<div class="t" style="top:313.97px;font-size:7px;line-height:8.04px;color:#333;left:374.60px;">Active</div>
<div class="t" style="top:313.97px;font-size:7px;line-height:8.04px;color:#333;left:435.60px;">MPR Panel</div>
<div class="t" style="top:313.97px;font-size:7px;line-height:8.04px;color:#333;left:537.60px;">Bidirectional</div>
<div class="t" style="top:313.97px;font-size:7px;line-height:8.04px;color:#4242a0;left:638.60px;">F400</div>
<div class="t" style="top:313.97px;font-size:7px;line-height:8.04px;color:#333;right:8.00px;">24</div>
<svg class="abs" style="left:12px;top:328.0px" width="6" height="6"><path d="M0.3 2.8 L5.1 2.8 M2.7 0.4 L2.7 5.2" stroke="#4c5e70" stroke-width="1.25"/></svg>
<div class="t" style="top:326.97px;font-size:7px;line-height:8.04px;color:#4242a0;left:24.60px;">A21822253</div>
<div class="t" style="top:326.97px;font-size:7px;line-height:8.04px;color:#4242a0;left:96.60px;">DAL001</div>
<div class="t" style="top:326.97px;font-size:7px;line-height:8.04px;color:#4242a0;left:158.60px;">4th East MPR</div>
<div class="t" style="top:326.97px;font-size:7px;line-height:8.04px;color:#333;right:426.00px;">84</div>
<div class="t" style="top:326.97px;font-size:7px;line-height:8.04px;color:#333;right:391.00px;">84</div>
<div class="t" style="top:326.97px;font-size:7px;line-height:8.04px;color:#333;left:312.60px;">DS1/E1</div>
<div class="t" style="top:326.97px;font-size:7px;line-height:8.04px;color:#333;left:374.60px;">Active</div>
<div class="t" style="top:326.97px;font-size:7px;line-height:8.04px;color:#333;left:435.60px;">Equipment Panel</div>
<div class="t" style="top:326.97px;font-size:7px;line-height:8.04px;color:#333;left:537.60px;">Bidirectional</div>
<div class="t" style="top:326.97px;font-size:7px;line-height:8.04px;color:#4242a0;left:638.60px;">F500</div>
<div class="t" style="top:326.97px;font-size:7px;line-height:8.04px;color:#333;right:8.00px;">84</div>
<svg class="abs" style="left:12px;top:342.0px" width="6" height="6"><path d="M0.3 2.8 L5.1 2.8 M2.7 0.4 L2.7 5.2" stroke="#4c5e70" stroke-width="1.25"/></svg>
<div class="t" style="top:340.97px;font-size:7px;line-height:8.04px;color:#4242a0;left:24.60px;">A21822271</div>
<div class="t" style="top:340.97px;font-size:7px;line-height:8.04px;color:#4242a0;left:96.60px;">DAL001</div>
<div class="t" style="top:340.97px;font-size:7px;line-height:8.04px;color:#4242a0;left:158.60px;">4th East MPR</div>
<div class="t" style="top:340.97px;font-size:7px;line-height:8.04px;color:#333;right:426.00px;">84</div>
<div class="t" style="top:340.97px;font-size:7px;line-height:8.04px;color:#333;right:391.00px;">84</div>
<div class="t" style="top:340.97px;font-size:7px;line-height:8.04px;color:#333;left:312.60px;">DS1/E1</div>
<div class="t" style="top:340.97px;font-size:7px;line-height:8.04px;color:#333;left:374.60px;">Active</div>
<div class="t" style="top:340.97px;font-size:7px;line-height:8.04px;color:#333;left:435.60px;">Equipment Panel</div>
<div class="t" style="top:340.97px;font-size:7px;line-height:8.04px;color:#333;left:537.60px;">Bidirectional</div>
<div class="t" style="top:340.97px;font-size:7px;line-height:8.04px;color:#4242a0;left:638.60px;">F500</div>
<div class="t" style="top:340.97px;font-size:7px;line-height:8.04px;color:#333;right:8.00px;">84</div>
<svg class="abs" style="left:12px;top:355.0px" width="6" height="6"><path d="M0.3 2.8 L5.1 2.8 M2.7 0.4 L2.7 5.2" stroke="#4c5e70" stroke-width="1.25"/></svg>
<div class="t" style="top:353.97px;font-size:7px;line-height:8.04px;color:#4242a0;left:24.60px;">A21822273</div>
<div class="t" style="top:353.97px;font-size:7px;line-height:8.04px;color:#4242a0;left:96.60px;">DAL001</div>
<div class="t" style="top:353.97px;font-size:7px;line-height:8.04px;color:#4242a0;left:158.60px;">4th East MPR</div>
<div class="t" style="top:353.97px;font-size:7px;line-height:8.04px;color:#333;right:426.00px;">48</div>
<div class="t" style="top:353.97px;font-size:7px;line-height:8.04px;color:#333;right:391.00px;">48</div>
<div class="t" style="top:353.97px;font-size:7px;line-height:8.04px;color:#333;left:312.60px;">Ethernet</div>
<div class="t" style="top:353.97px;font-size:7px;line-height:8.04px;color:#333;left:374.60px;">Active</div>
<div class="t" style="top:353.97px;font-size:7px;line-height:8.04px;color:#333;left:435.60px;">MPR Panel</div>
<div class="t" style="top:353.97px;font-size:7px;line-height:8.04px;color:#333;left:537.60px;">Bidirectional</div>
<div class="t" style="top:353.97px;font-size:7px;line-height:8.04px;color:#4242a0;left:638.60px;">F500</div>
<div class="t" style="top:353.97px;font-size:7px;line-height:8.04px;color:#333;right:8.00px;">48</div>
<svg class="abs" style="left:12px;top:369.0px" width="6" height="6"><path d="M0.3 2.8 L5.1 2.8 M2.7 0.4 L2.7 5.2" stroke="#4c5e70" stroke-width="1.25"/></svg>
<div class="t" style="top:367.97px;font-size:7px;line-height:8.04px;color:#4242a0;left:24.60px;">A21822272</div>
<div class="t" style="top:367.97px;font-size:7px;line-height:8.04px;color:#4242a0;left:96.60px;">DAL001</div>
<div class="t" style="top:367.97px;font-size:7px;line-height:8.04px;color:#4242a0;left:158.60px;">4th East MPR</div>
<div class="t" style="top:367.97px;font-size:7px;line-height:8.04px;color:#333;right:426.00px;">84</div>
<div class="t" style="top:367.97px;font-size:7px;line-height:8.04px;color:#333;right:391.00px;">84</div>
<div class="t" style="top:367.97px;font-size:7px;line-height:8.04px;color:#333;left:312.60px;">DS1/E1</div>
<div class="t" style="top:367.97px;font-size:7px;line-height:8.04px;color:#333;left:374.60px;">Active</div>
<div class="t" style="top:367.97px;font-size:7px;line-height:8.04px;color:#333;left:435.60px;">Equipment Panel</div>
<div class="t" style="top:367.97px;font-size:7px;line-height:8.04px;color:#333;left:537.60px;">Bidirectional</div>
<div class="t" style="top:367.97px;font-size:7px;line-height:8.04px;color:#4242a0;left:638.60px;">F500</div>
<div class="t" style="top:367.97px;font-size:7px;line-height:8.04px;color:#333;right:8.00px;">84</div>
<svg class="abs" style="left:12px;top:382.0px" width="6" height="6"><path d="M0.3 2.8 L5.1 2.8 M2.7 0.4 L2.7 5.2" stroke="#4c5e70" stroke-width="1.25"/></svg>
<div class="t" style="top:380.97px;font-size:7px;line-height:8.04px;color:#4242a0;left:24.60px;">A21822303</div>
<div class="t" style="top:380.97px;font-size:7px;line-height:8.04px;color:#4242a0;left:96.60px;">DAL001</div>
<div class="t" style="top:380.97px;font-size:7px;line-height:8.04px;color:#4242a0;left:158.60px;">4th East MPR</div>
<div class="t" style="top:380.97px;font-size:7px;line-height:8.04px;color:#333;right:426.00px;">144</div>
<div class="t" style="top:380.97px;font-size:7px;line-height:8.04px;color:#333;right:391.00px;">144</div>
<div class="t" style="top:380.97px;font-size:7px;line-height:8.04px;color:#333;left:312.60px;">Fiber</div>
<div class="t" style="top:380.97px;font-size:7px;line-height:8.04px;color:#333;left:374.60px;">Active</div>
<div class="t" style="top:380.97px;font-size:7px;line-height:8.04px;color:#333;left:435.60px;">MPR Panel</div>
<div class="t" style="top:380.97px;font-size:7px;line-height:8.04px;color:#333;left:537.60px;">Odds and Evens</div>
<div class="t" style="top:380.97px;font-size:7px;line-height:8.04px;color:#4242a0;left:638.60px;">R300</div>
<div class="t" style="top:380.97px;font-size:7px;line-height:8.04px;color:#333;right:8.00px;">144</div>
<svg class="abs" style="left:12px;top:396.0px" width="6" height="6"><path d="M0.3 2.8 L5.1 2.8 M2.7 0.4 L2.7 5.2" stroke="#4c5e70" stroke-width="1.25"/></svg>
<div class="t" style="top:394.97px;font-size:7px;line-height:8.04px;color:#4242a0;left:24.60px;">A21822302</div>
<div class="t" style="top:394.97px;font-size:7px;line-height:8.04px;color:#4242a0;left:96.60px;">DAL001</div>
<div class="t" style="top:394.97px;font-size:7px;line-height:8.04px;color:#4242a0;left:158.60px;">4th East MPR</div>
<div class="t" style="top:394.97px;font-size:7px;line-height:8.04px;color:#333;right:426.00px;">84</div>
<div class="t" style="top:394.97px;font-size:7px;line-height:8.04px;color:#333;right:391.00px;">77</div>
<div class="t" style="top:394.97px;font-size:7px;line-height:8.04px;color:#333;left:312.60px;">DS1/E1</div>
<div class="t" style="top:394.97px;font-size:7px;line-height:8.04px;color:#333;left:374.60px;">Active</div>
<div class="t" style="top:394.97px;font-size:7px;line-height:8.04px;color:#333;left:435.60px;">MPR Panel</div>
<div class="t" style="top:394.97px;font-size:7px;line-height:8.04px;color:#333;left:537.60px;">Bidirectional</div>
<div class="t" style="top:394.97px;font-size:7px;line-height:8.04px;color:#4242a0;left:638.60px;">R300</div>
<div class="t" style="top:394.97px;font-size:7px;line-height:8.04px;color:#333;right:8.00px;">84</div>
<svg class="abs" style="left:12px;top:409.0px" width="6" height="6"><path d="M0.3 2.8 L5.1 2.8 M2.7 0.4 L2.7 5.2" stroke="#4c5e70" stroke-width="1.25"/></svg>
<div class="t" style="top:407.97px;font-size:7px;line-height:8.04px;color:#4242a0;left:24.60px;">A21822295</div>
<div class="t" style="top:407.97px;font-size:7px;line-height:8.04px;color:#4242a0;left:96.60px;">DAL001</div>
<div class="t" style="top:407.97px;font-size:7px;line-height:8.04px;color:#4242a0;left:158.60px;">4th East MPR</div>
<div class="t" style="top:407.97px;font-size:7px;line-height:8.04px;color:#333;right:426.00px;">138</div>
<div class="t" style="top:407.97px;font-size:7px;line-height:8.04px;color:#333;right:391.00px;">144</div>
<div class="t" style="top:407.97px;font-size:7px;line-height:8.04px;color:#333;left:312.60px;">Fiber</div>
<div class="t" style="top:407.97px;font-size:7px;line-height:8.04px;color:#333;left:374.60px;">Active</div>
<div class="t" style="top:407.97px;font-size:7px;line-height:8.04px;color:#333;left:435.60px;">MPR Panel</div>
<div class="t" style="top:407.97px;font-size:7px;line-height:8.04px;color:#333;left:537.60px;">Odds and Evens</div>
<div class="t" style="top:407.97px;font-size:7px;line-height:8.04px;color:#4242a0;left:638.60px;">R300</div>
<div class="t" style="top:407.97px;font-size:7px;line-height:8.04px;color:#333;right:8.00px;">144</div>
<svg class="abs" style="left:12px;top:423.0px" width="6" height="6"><path d="M0.3 2.8 L5.1 2.8 M2.7 0.4 L2.7 5.2" stroke="#4c5e70" stroke-width="1.25"/></svg>
<div class="t" style="top:421.97px;font-size:7px;line-height:8.04px;color:#4242a0;left:24.60px;">A21821749</div>
<div class="t" style="top:421.97px;font-size:7px;line-height:8.04px;color:#4242a0;left:96.60px;">DC055</div>
<div class="t" style="top:421.97px;font-size:7px;line-height:8.04px;color:#4242a0;left:158.60px;">Room 101</div>
<div class="t" style="top:421.97px;font-size:7px;line-height:8.04px;color:#333;right:426.00px;">144</div>
<div class="t" style="top:421.97px;font-size:7px;line-height:8.04px;color:#333;right:391.00px;">144</div>
<div class="t" style="top:421.97px;font-size:7px;line-height:8.04px;color:#333;left:312.60px;">Fiber</div>
<div class="t" style="top:421.97px;font-size:7px;line-height:8.04px;color:#333;left:374.60px;">Active</div>
<div class="t" style="top:421.97px;font-size:7px;line-height:8.04px;color:#333;left:435.60px;">MPR Panel</div>
<div class="t" style="top:421.97px;font-size:7px;line-height:8.04px;color:#333;left:537.60px;">Odds and Evens</div>
<div class="t" style="top:421.97px;font-size:7px;line-height:8.04px;color:#4242a0;left:638.60px;">RM101</div>
<div class="t" style="top:421.97px;font-size:7px;line-height:8.04px;color:#333;right:8.00px;">144</div>
<svg class="abs" style="left:12px;top:436.0px" width="6" height="6"><path d="M0.3 2.8 L5.1 2.8 M2.7 0.4 L2.7 5.2" stroke="#4c5e70" stroke-width="1.25"/></svg>
<div class="t" style="top:434.97px;font-size:7px;line-height:8.04px;color:#4242a0;left:24.60px;">A21821744</div>
<div class="t" style="top:434.97px;font-size:7px;line-height:8.04px;color:#4242a0;left:96.60px;">DC055</div>
<div class="t" style="top:434.97px;font-size:7px;line-height:8.04px;color:#4242a0;left:158.60px;">Room 101</div>
<div class="t" style="top:434.97px;font-size:7px;line-height:8.04px;color:#333;right:426.00px;">68</div>
<div class="t" style="top:434.97px;font-size:7px;line-height:8.04px;color:#333;right:391.00px;">68</div>
<div class="t" style="top:434.97px;font-size:7px;line-height:8.04px;color:#333;left:312.60px;">DS3</div>
<div class="t" style="top:434.97px;font-size:7px;line-height:8.04px;color:#333;left:374.60px;">Active</div>
<div class="t" style="top:434.97px;font-size:7px;line-height:8.04px;color:#333;left:435.60px;">MPR Panel</div>
<div class="t" style="top:434.97px;font-size:7px;line-height:8.04px;color:#333;left:537.60px;">Range</div>
<div class="t" style="top:434.97px;font-size:7px;line-height:8.04px;color:#4242a0;left:638.60px;">RM101</div>
<div class="t" style="top:434.97px;font-size:7px;line-height:8.04px;color:#333;right:8.00px;">72</div>
<svg class="abs" style="left:12px;top:450.0px" width="6" height="6"><path d="M0.3 2.8 L5.1 2.8 M2.7 0.4 L2.7 5.2" stroke="#4c5e70" stroke-width="1.25"/></svg>
<div class="t" style="top:448.97px;font-size:7px;line-height:8.04px;color:#4242a0;left:24.60px;">A21821628</div>
<div class="t" style="top:448.97px;font-size:7px;line-height:8.04px;color:#4242a0;left:96.60px;">DC055</div>
<div class="t" style="top:448.97px;font-size:7px;line-height:8.04px;color:#4242a0;left:158.60px;">Room 101</div>
<div class="t" style="top:448.97px;font-size:7px;line-height:8.04px;color:#333;right:426.00px;">21</div>
<div class="t" style="top:448.97px;font-size:7px;line-height:8.04px;color:#333;right:391.00px;">24</div>
<div class="t" style="top:448.97px;font-size:7px;line-height:8.04px;color:#333;left:312.60px;">DS3</div>
<div class="t" style="top:448.97px;font-size:7px;line-height:8.04px;color:#333;left:374.60px;">Active</div>
<div class="t" style="top:448.97px;font-size:7px;line-height:8.04px;color:#333;left:435.60px;">MPR Panel</div>
<div class="t" style="top:448.97px;font-size:7px;line-height:8.04px;color:#333;left:537.60px;">Bidirectional</div>
<div class="t" style="top:448.97px;font-size:7px;line-height:8.04px;color:#4242a0;left:638.60px;">RM101</div>
<div class="t" style="top:448.97px;font-size:7px;line-height:8.04px;color:#333;right:8.00px;">24</div>
<div class="t" style="top:462.37px;font-size:7px;line-height:8.04px;color:#777;right:13.40px;">Total</div>
<div class="t" style="top:475.97px;font-size:7px;line-height:8.04px;color:#333;right:8.20px;letter-spacing:0.141px;">902,406</div>
<div class="t" style="top:501.07px;font-size:7px;line-height:8.04px;color:#bfbfbf;left:5.00px;letter-spacing:0.243px;">&#169; 2015 NCS, Inc (58 ms) Desktop | <span style="color:#a6b6d6">Mobile</span></div>
<div class="t" style="top:501.07px;font-size:7px;line-height:8.04px;color:#c4c4c4;left:556.50px;letter-spacing:0.165px;">Powered by Network Capacity Solutions&#8482;</div>
</body></html>
